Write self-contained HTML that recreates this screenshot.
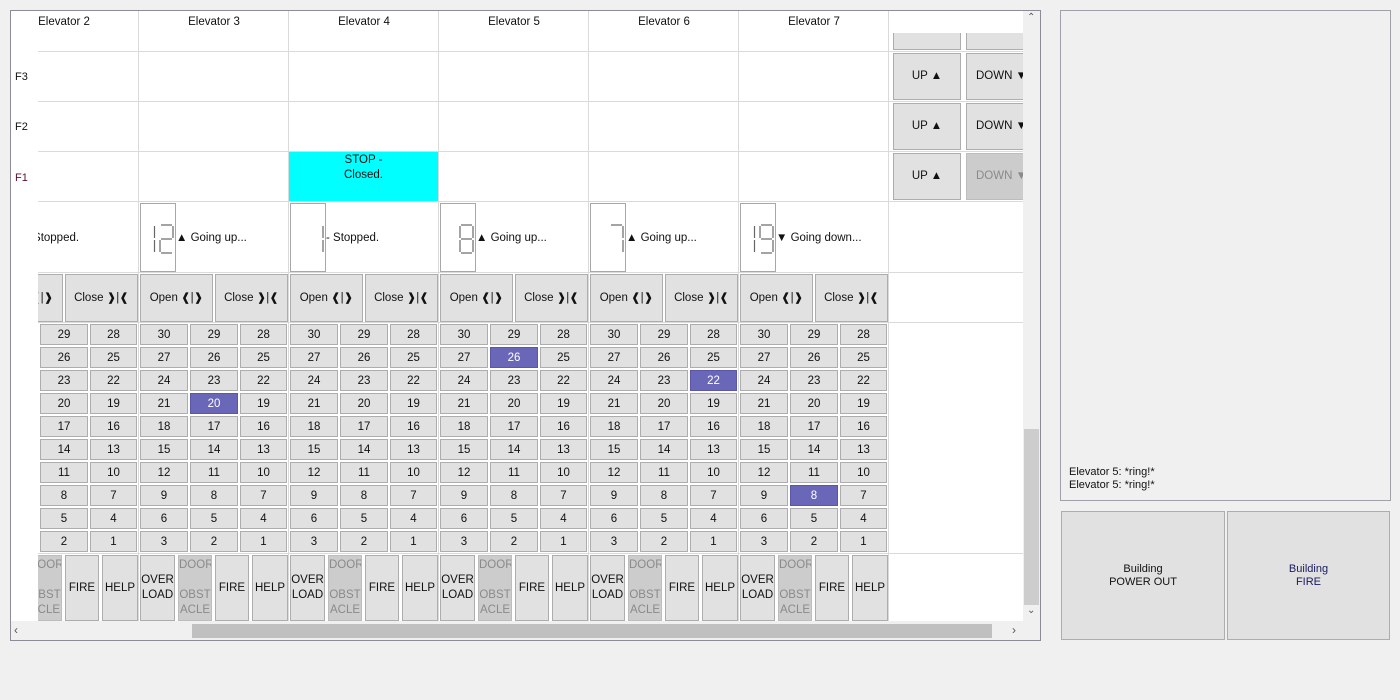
<!DOCTYPE html>
<html><head><meta charset="utf-8"><style>
*{box-sizing:border-box;margin:0;padding:0}
body{width:1400px;height:700px;background:#f0f0f0;font-family:"Liberation Sans","DejaVu Sans",sans-serif;font-size:11px;color:#111;position:relative;overflow:hidden}
.abs{position:absolute}
#frame{left:10px;top:10px;width:1031px;height:631px;border:1px solid #8c8c96;background:#fff}
#clip{left:11px;top:11px;width:1012px;height:610px;overflow:hidden;background:#fff}
#inner{position:absolute;left:-11px;top:-11px;width:1100px;height:700px}
.hl{position:absolute;left:38px;width:1000px;height:1px;background:#dadada}
.vl{position:absolute;top:11px;width:1px;height:610px;background:#dadada}
.col{position:absolute;top:0;width:150px;height:640px}
.btn{position:absolute;background:#e1e1e1;border:1px solid #adadad;display:flex;align-items:center;justify-content:center;text-align:center;line-height:15px;font-size:11.5px;color:#111}
.dis{background:#cccccc;color:#8a8a8a;border-color:#bdbdbd}
.disp{position:absolute;left:1px;top:203px;width:36px;height:69px;border:1px solid #a8a8a8;background:#fff}
.st{position:absolute;left:37px;top:232px;white-space:nowrap;font-size:11.5px}
.fg{position:absolute;left:1px;top:324px;display:grid;grid-template-columns:48px 48px 47px;grid-auto-rows:21px;gap:2px;font-size:11.5px}
.fg div{background:#e1e1e1;border:1px solid #adadad;display:flex;align-items:center;justify-content:center}
.fg .on{background:#6b67b8;border-color:#5a57a8;color:#fff}
.hd{position:absolute;top:16px;width:150px;text-align:center;font-size:11.5px}
svg line{stroke:#666;stroke-width:1.2}
</style></head><body>
<div class="abs" id="frame"></div>
<div class="abs" id="clip"><div id="inner">
<div class="hl" style="top:51px"></div><div class="hl" style="top:101px"></div><div class="hl" style="top:151px"></div><div class="hl" style="top:201px"></div><div class="hl" style="top:272px"></div><div class="hl" style="top:322px"></div><div class="hl" style="top:553px"></div>
<div class="vl" style="left:138px"></div><div class="vl" style="left:288px"></div><div class="vl" style="left:438px"></div><div class="vl" style="left:588px"></div><div class="vl" style="left:738px"></div><div class="vl" style="left:888px"></div>
<div class="abs" style="left:289px;top:152px;width:149px;height:49px;background:#00ffff;text-align:center;padding-top:1px;line-height:15px;font-size:11.5px">STOP -<br>Closed.</div>

<!-- col2 -->
<div class="col" style="left:-11px">
<div class="hd">Elevator 2</div>
<div class="st" style="left:37px">- Stopped.</div>
<div class="btn" style="left:1px;top:274px;width:73px;height:48px">Open ❰|❱</div>
<div class="btn" style="left:76px;top:274px;width:73px;height:48px">Close ❱|❰</div>
<div class="fg"><div>30</div><div>29</div><div>28</div><div>27</div><div>26</div><div>25</div><div>24</div><div>23</div><div>22</div><div>21</div><div>20</div><div>19</div><div>18</div><div>17</div><div>16</div><div>15</div><div>14</div><div>13</div><div>12</div><div>11</div><div>10</div><div>9</div><div>8</div><div>7</div><div>6</div><div>5</div><div>4</div><div>3</div><div>2</div><div>1</div></div>
<div class="btn" style="left:1px;top:555px;width:35px;height:66px">OVER<br>LOAD</div>
<div class="btn dis" style="left:39px;top:555px;width:34px;height:66px;display:block;padding-top:2px;overflow:hidden">DOOR<br><br>OBST<br>ACLE</div>
<div class="btn" style="left:76px;top:555px;width:34px;height:66px">FIRE</div>
<div class="btn" style="left:113px;top:555px;width:36px;height:66px">HELP</div>
</div>

<!-- col3 -->
<div class="col" style="left:139px">
<div class="hd">Elevator 3</div>
<div class="disp"><svg width="36" height="69"><line x1="13.5" y1="22" x2="13.5" y2="34"/><line x1="13.5" y1="36" x2="13.5" y2="48"/><line x1="20" y1="21" x2="31" y2="21"/><line x1="32" y1="22" x2="32" y2="34"/><line x1="20" y1="35" x2="31" y2="35"/><line x1="19" y1="36" x2="19" y2="48"/><line x1="20" y1="49" x2="31" y2="49"/></svg></div>
<div class="st">▲ Going up...</div>
<div class="btn" style="left:1px;top:274px;width:73px;height:48px">Open ❰|❱</div>
<div class="btn" style="left:76px;top:274px;width:73px;height:48px">Close ❱|❰</div>
<div class="fg"><div>30</div><div>29</div><div>28</div><div>27</div><div>26</div><div>25</div><div>24</div><div>23</div><div>22</div><div>21</div><div class="on">20</div><div>19</div><div>18</div><div>17</div><div>16</div><div>15</div><div>14</div><div>13</div><div>12</div><div>11</div><div>10</div><div>9</div><div>8</div><div>7</div><div>6</div><div>5</div><div>4</div><div>3</div><div>2</div><div>1</div></div>
<div class="btn" style="left:1px;top:555px;width:35px;height:66px">OVER<br>LOAD</div>
<div class="btn dis" style="left:39px;top:555px;width:34px;height:66px;display:block;padding-top:2px;overflow:hidden">DOOR<br><br>OBST<br>ACLE</div>
<div class="btn" style="left:76px;top:555px;width:34px;height:66px">FIRE</div>
<div class="btn" style="left:113px;top:555px;width:36px;height:66px">HELP</div>
</div>

<!-- col4 -->
<div class="col" style="left:289px">
<div class="hd">Elevator 4</div>
<div class="disp"><svg width="36" height="69"><line x1="32" y1="22" x2="32" y2="34"/><line x1="32" y1="36" x2="32" y2="48"/></svg></div>
<div class="st">- Stopped.</div>
<div class="btn" style="left:1px;top:274px;width:73px;height:48px">Open ❰|❱</div>
<div class="btn" style="left:76px;top:274px;width:73px;height:48px">Close ❱|❰</div>
<div class="fg"><div>30</div><div>29</div><div>28</div><div>27</div><div>26</div><div>25</div><div>24</div><div>23</div><div>22</div><div>21</div><div>20</div><div>19</div><div>18</div><div>17</div><div>16</div><div>15</div><div>14</div><div>13</div><div>12</div><div>11</div><div>10</div><div>9</div><div>8</div><div>7</div><div>6</div><div>5</div><div>4</div><div>3</div><div>2</div><div>1</div></div>
<div class="btn" style="left:1px;top:555px;width:35px;height:66px">OVER<br>LOAD</div>
<div class="btn dis" style="left:39px;top:555px;width:34px;height:66px;display:block;padding-top:2px;overflow:hidden">DOOR<br><br>OBST<br>ACLE</div>
<div class="btn" style="left:76px;top:555px;width:34px;height:66px">FIRE</div>
<div class="btn" style="left:113px;top:555px;width:36px;height:66px">HELP</div>
</div>

<!-- col5 -->
<div class="col" style="left:439px">
<div class="hd">Elevator 5</div>
<div class="disp"><svg width="36" height="69"><line x1="20" y1="21" x2="31" y2="21"/><line x1="32" y1="22" x2="32" y2="34"/><line x1="32" y1="36" x2="32" y2="48"/><line x1="20" y1="35" x2="31" y2="35"/><line x1="19" y1="22" x2="19" y2="34"/><line x1="19" y1="36" x2="19" y2="48"/><line x1="20" y1="49" x2="31" y2="49"/></svg></div>
<div class="st">▲ Going up...</div>
<div class="btn" style="left:1px;top:274px;width:73px;height:48px">Open ❰|❱</div>
<div class="btn" style="left:76px;top:274px;width:73px;height:48px">Close ❱|❰</div>
<div class="fg"><div>30</div><div>29</div><div>28</div><div>27</div><div class="on">26</div><div>25</div><div>24</div><div>23</div><div>22</div><div>21</div><div>20</div><div>19</div><div>18</div><div>17</div><div>16</div><div>15</div><div>14</div><div>13</div><div>12</div><div>11</div><div>10</div><div>9</div><div>8</div><div>7</div><div>6</div><div>5</div><div>4</div><div>3</div><div>2</div><div>1</div></div>
<div class="btn" style="left:1px;top:555px;width:35px;height:66px">OVER<br>LOAD</div>
<div class="btn dis" style="left:39px;top:555px;width:34px;height:66px;display:block;padding-top:2px;overflow:hidden">DOOR<br><br>OBST<br>ACLE</div>
<div class="btn" style="left:76px;top:555px;width:34px;height:66px">FIRE</div>
<div class="btn" style="left:113px;top:555px;width:36px;height:66px">HELP</div>
</div>

<!-- col6 -->
<div class="col" style="left:589px">
<div class="hd">Elevator 6</div>
<div class="disp"><svg width="36" height="69"><line x1="20" y1="21" x2="31" y2="21"/><line x1="32" y1="22" x2="32" y2="34"/><line x1="32" y1="36" x2="32" y2="48"/></svg></div>
<div class="st">▲ Going up...</div>
<div class="btn" style="left:1px;top:274px;width:73px;height:48px">Open ❰|❱</div>
<div class="btn" style="left:76px;top:274px;width:73px;height:48px">Close ❱|❰</div>
<div class="fg"><div>30</div><div>29</div><div>28</div><div>27</div><div>26</div><div>25</div><div>24</div><div>23</div><div class="on">22</div><div>21</div><div>20</div><div>19</div><div>18</div><div>17</div><div>16</div><div>15</div><div>14</div><div>13</div><div>12</div><div>11</div><div>10</div><div>9</div><div>8</div><div>7</div><div>6</div><div>5</div><div>4</div><div>3</div><div>2</div><div>1</div></div>
<div class="btn" style="left:1px;top:555px;width:35px;height:66px">OVER<br>LOAD</div>
<div class="btn dis" style="left:39px;top:555px;width:34px;height:66px;display:block;padding-top:2px;overflow:hidden">DOOR<br><br>OBST<br>ACLE</div>
<div class="btn" style="left:76px;top:555px;width:34px;height:66px">FIRE</div>
<div class="btn" style="left:113px;top:555px;width:36px;height:66px">HELP</div>
</div>

<!-- col7 -->
<div class="col" style="left:739px">
<div class="hd">Elevator 7</div>
<div class="disp"><svg width="36" height="69"><line x1="13.5" y1="22" x2="13.5" y2="34"/><line x1="13.5" y1="36" x2="13.5" y2="48"/><line x1="20" y1="21" x2="31" y2="21"/><line x1="32" y1="22" x2="32" y2="34"/><line x1="32" y1="36" x2="32" y2="48"/><line x1="20" y1="35" x2="31" y2="35"/><line x1="19" y1="22" x2="19" y2="34"/><line x1="20" y1="49" x2="31" y2="49"/></svg></div>
<div class="st">▼ Going down...</div>
<div class="btn" style="left:1px;top:274px;width:73px;height:48px">Open ❰|❱</div>
<div class="btn" style="left:76px;top:274px;width:73px;height:48px">Close ❱|❰</div>
<div class="fg"><div>30</div><div>29</div><div>28</div><div>27</div><div>26</div><div>25</div><div>24</div><div>23</div><div>22</div><div>21</div><div>20</div><div>19</div><div>18</div><div>17</div><div>16</div><div>15</div><div>14</div><div>13</div><div>12</div><div>11</div><div>10</div><div>9</div><div class="on">8</div><div>7</div><div>6</div><div>5</div><div>4</div><div>3</div><div>2</div><div>1</div></div>
<div class="btn" style="left:1px;top:555px;width:35px;height:66px">OVER<br>LOAD</div>
<div class="btn dis" style="left:39px;top:555px;width:34px;height:66px;display:block;padding-top:2px;overflow:hidden">DOOR<br><br>OBST<br>ACLE</div>
<div class="btn" style="left:76px;top:555px;width:34px;height:66px">FIRE</div>
<div class="btn" style="left:113px;top:555px;width:36px;height:66px">HELP</div>
</div>

<!-- call buttons -->
<div class="btn" style="left:893px;top:33px;width:68px;height:17px;border-top:none"></div>
<div class="btn" style="left:966px;top:33px;width:68px;height:17px;border-top:none"></div>
<div class="btn" style="left:893px;top:53px;width:68px;height:47px">UP ▲</div>
<div class="btn" style="left:966px;top:53px;width:68px;height:47px;justify-content:flex-start;padding-left:9px">DOWN ▼</div>
<div class="btn" style="left:893px;top:103px;width:68px;height:47px">UP ▲</div>
<div class="btn" style="left:966px;top:103px;width:68px;height:47px;justify-content:flex-start;padding-left:9px">DOWN ▼</div>
<div class="btn" style="left:893px;top:153px;width:68px;height:47px">UP ▲</div>
<div class="btn dis" style="left:966px;top:153px;width:68px;height:47px;justify-content:flex-start;padding-left:9px">DOWN ▼</div>

<!-- row header -->
<div class="abs" style="left:11px;top:11px;width:27px;height:610px;background:#fff"></div>
<div class="abs" style="left:15px;top:71px">F3</div>
<div class="abs" style="left:15px;top:121px">F2</div>
<div class="abs" style="left:15px;top:172px;color:#5a1030">F1</div>
</div></div>

<!-- vertical scrollbar -->
<div class="abs" style="left:1023px;top:11px;width:17px;height:610px;background:#f0f0f0"></div>
<div class="abs" style="left:1027px;top:12px;font-size:10px;color:#555">&#8963;</div>
<div class="abs" style="left:1024px;top:429px;width:15px;height:176px;background:#cdcdcd"></div>
<div class="abs" style="left:1027px;top:605px;font-size:10px;color:#555">&#8964;</div>
<!-- horizontal scrollbar -->
<div class="abs" style="left:11px;top:621px;width:1029px;height:19px;background:#f0f0f0"></div>
<div class="abs" style="left:14px;top:623px;font-size:12px;color:#555">‹</div>
<div class="abs" style="left:192px;top:624px;width:800px;height:14px;background:#c0c0c0"></div>
<div class="abs" style="left:1012px;top:623px;font-size:12px;color:#555">›</div>

<!-- right panel -->
<div class="abs" style="left:1060px;top:10px;width:331px;height:491px;border:1px solid #a0a0a8;background:#f0f0f0"></div>
<div class="abs" style="left:1069px;top:466px;font-size:11px;line-height:13px">Elevator 5: *ring!*<br>Elevator 5: *ring!*</div>
<div class="btn" style="left:1061px;top:511px;width:164px;height:129px;font-size:11px;line-height:13px">Building<br>POWER OUT</div>
<div class="btn" style="left:1227px;top:511px;width:163px;height:129px;font-size:11px;line-height:13px;color:#1a1a60">Building<br>FIRE</div>
</body></html>
